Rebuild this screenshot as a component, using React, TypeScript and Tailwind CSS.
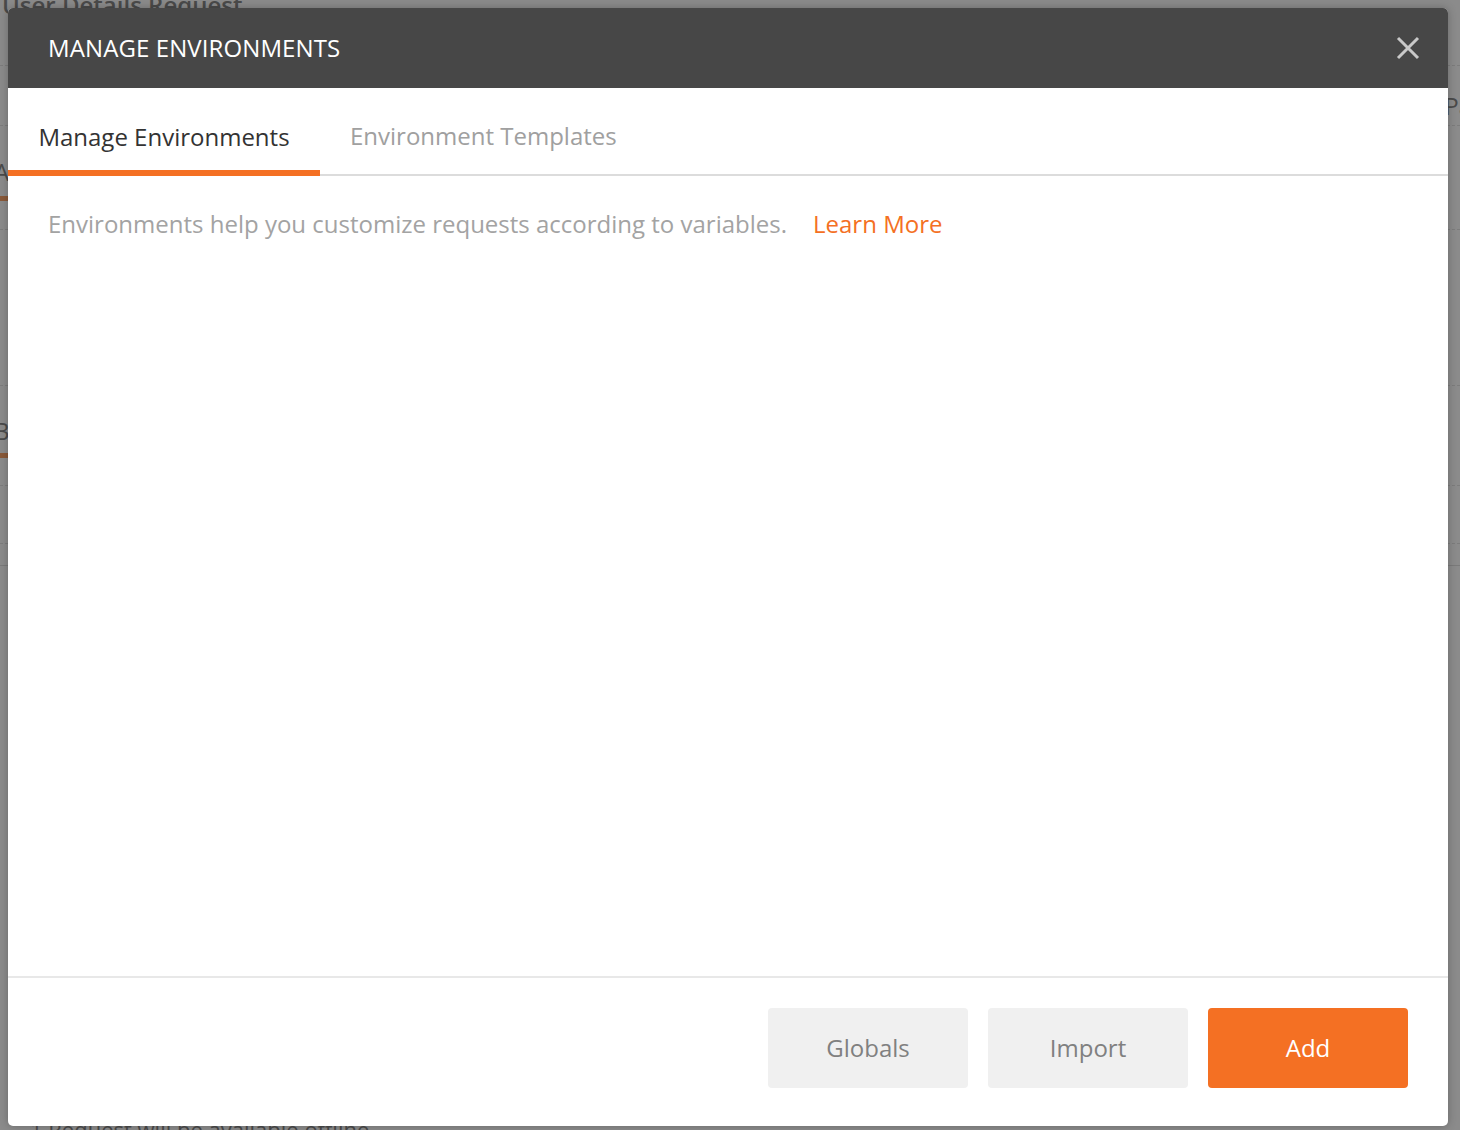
import React from "react";

export default function App() {
  const font = { fontFamily: '"Open Sans", "Noto Sans", sans-serif' };
  return (
    <div className="relative w-[1460px] h-[1130px] overflow-hidden bg-[#8b8b8b]" style={font}>
      {/* dimmed background app */}
      <div className="flex flex-col w-full h-full text-[#4a4a4a]">
        <div className="h-[66px] border-b border-dashed border-[#7c7c7c] pl-[2px] text-[24px] leading-[10px] font-semibold">
          User Details Request
        </div>
        <div className="h-[60px] border-b border-dashed border-[#7c7c7c] flex justify-end items-center text-[24px] pr-0">
          <span className="mr-[-12px] mt-[20px]">Pa</span>
        </div>
        <div className="h-[104px] border-b border-dashed border-[#7c7c7c] flex flex-col justify-center">
          <span className="text-[24px] ml-[-6px]">A</span>
          <div className="w-[14px] h-[5px] bg-[#8a5a3a] mt-[6px]"></div>
        </div>
        <div className="h-[156px] border-b border-dashed border-[#7c7c7c]"></div>
        <div className="h-[100px] border-b border-dashed border-[#7c7c7c] flex flex-col justify-center">
          <span className="text-[24px] ml-[-6px]">B</span>
          <div className="w-[14px] h-[5px] bg-[#8a5a3a] mt-[4px]"></div>
        </div>
        <div className="h-[58px] border-b border-dashed border-[#7c7c7c]"></div>
        <div className="h-[22px] border-b border-[#7a7a7a]"></div>
        <div className="flex-1"></div>
        <div className="h-[16px] pl-[30px] text-[22px] leading-[30px] text-[#4a4a4a]">1 Request will be available offline</div>
      </div>

      {/* modal */}
      <div className="absolute left-[8px] top-[8px] w-[1440px] h-[1118px] bg-white rounded-[5px] overflow-hidden flex flex-col shadow-[0_0_8px_rgba(0,0,0,0.25)]">
        <div className="h-[80px] shrink-0 bg-[#474747] flex items-center justify-between pl-[40px] pr-[28px]">
          <span className="text-white text-[24px] tracking-[0.1px]">MANAGE ENVIRONMENTS</span>
          <svg width="24" height="24" viewBox="0 0 24 24">
            <path d="M2 2 L22 22 M22 2 L2 22" stroke="#c9c9c9" strokeWidth="3" />
          </svg>
        </div>
        <div className="h-[88px] shrink-0 flex border-b-2 border-[#dcdcdc]">
          <div className="w-[312px] flex items-center justify-center border-b-[6px] border-[#f47023] mb-[-2px] pt-[16px]">
            <span className="text-[24px] text-[#333333]">Manage Environments</span>
          </div>
          <div className="px-[30px] flex items-center pt-[10px]">
            <span className="text-[24px] text-[#a0a0a0]">Environment Templates</span>
          </div>
        </div>
        <div className="flex-1 pl-[40px] pt-[30px]">
          <span className="text-[24px] text-[#a3a3a3]">Environments help you customize requests according to variables.</span>
          <span className="text-[24px] text-[#f47023] ml-[26px]">Learn More</span>
        </div>
        <div className="shrink-0 border-t-2 border-[#e8e8e8] h-[150px] flex items-start justify-end gap-[20px] pr-[40px] pt-[30px]">
          <button className="w-[200px] h-[80px] rounded-[4px] bg-[#f0f0f0] text-[#808080] text-[24px]">Globals</button>
          <button className="w-[200px] h-[80px] rounded-[4px] bg-[#f0f0f0] text-[#808080] text-[24px]">Import</button>
          <button className="w-[200px] h-[80px] rounded-[4px] bg-[#f47023] text-white text-[24px]">Add</button>
        </div>
      </div>
    </div>
  );
}
